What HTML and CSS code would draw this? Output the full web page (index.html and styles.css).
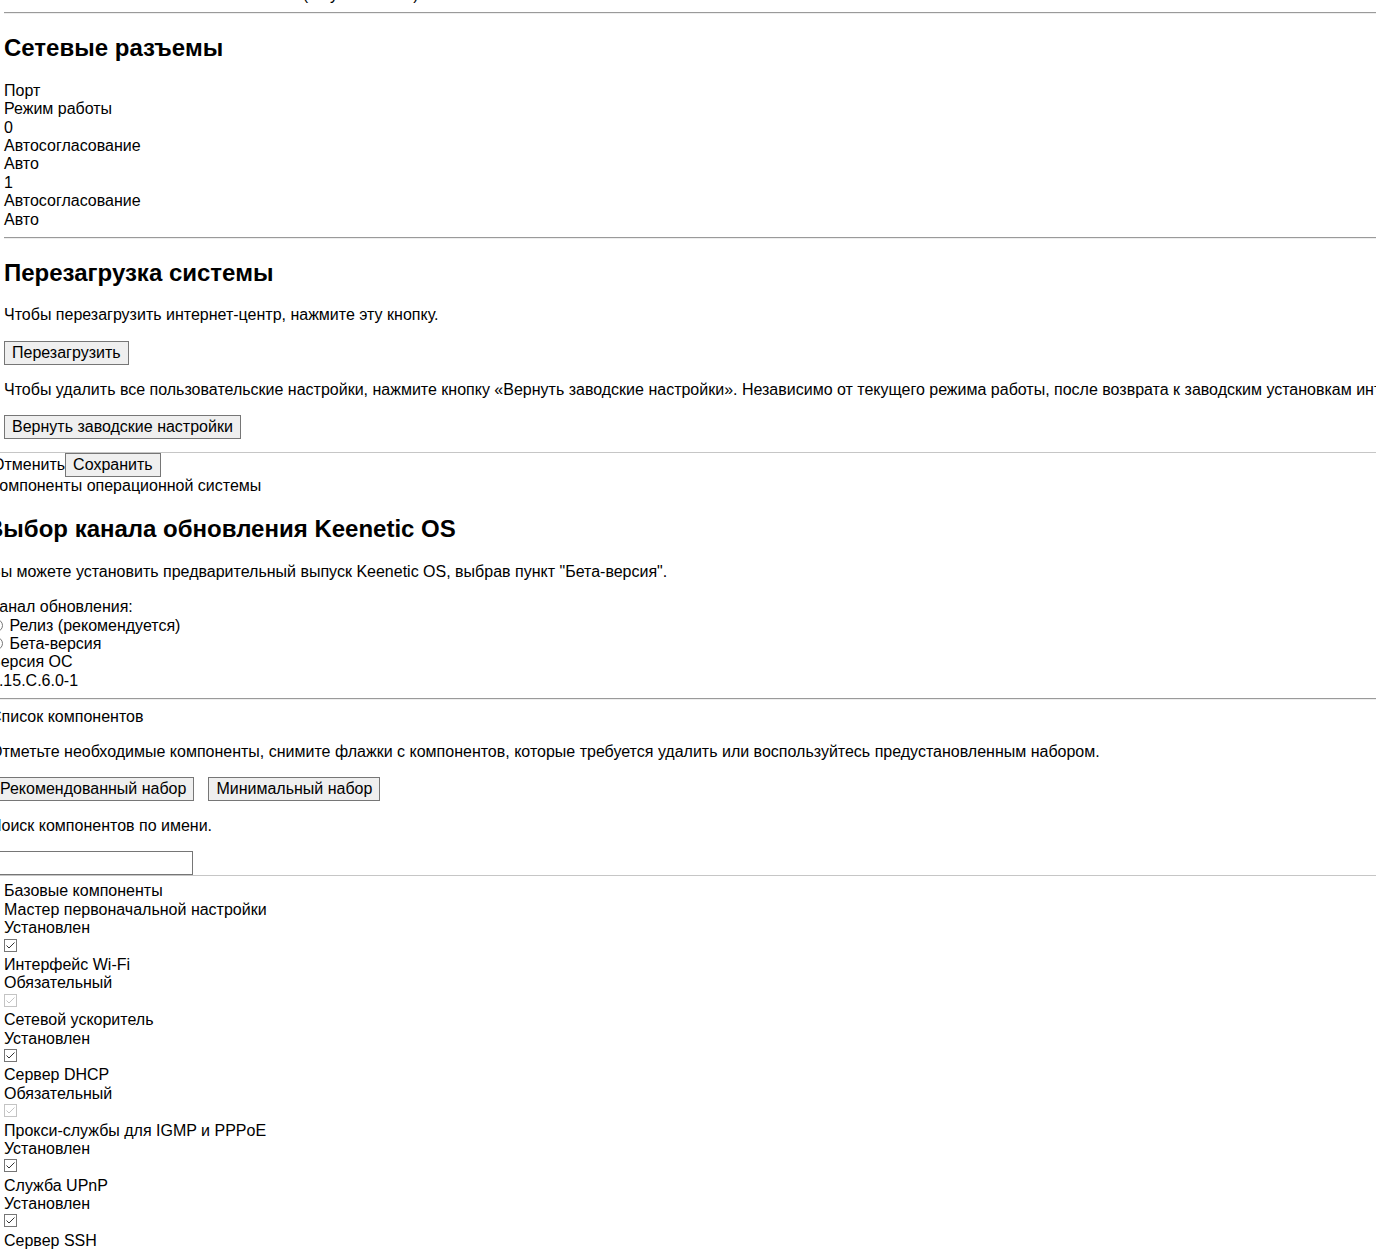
FILE: index.html
```html
<!DOCTYPE html>
<html lang="ru">
<head>
<meta charset="utf-8">
<title>Системные настройки</title>
<link rel="stylesheet" href="styles.css">
</head>
<body>
<div class="page">
  <div class="cut">Автоматическое включение EEE на все (по умолчанию)</div>
  <hr class="rule">

  <h2 class="title">Сетевые разъемы</h2>
  <div class="lines">
    <div>Порт</div>
    <div>Режим работы</div>
    <div>0</div>
    <div>Автосогласование</div>
    <div>Авто</div>
    <div>1</div>
    <div>Автосогласование</div>
    <div>Авто</div>
  </div>
  <hr class="rule">

  <h2 class="title">Перезагрузка системы</h2>
  <p class="text">Чтобы перезагрузить интернет-центр, нажмите эту кнопку.</p>
  <div class="btn-row"><button class="btn" type="button">Перезагрузить</button></div>
  <p class="text wide">Чтобы удалить все пользовательские настройки, нажмите кнопку «Вернуть заводские настройки». Независимо от текущего режима работы, после возврата к заводским установкам интернет-центр будет работать в основном режиме.</p>
  <div class="btn-row"><button class="btn" type="button">Вернуть заводские настройки</button></div>
</div>

<div class="shifted">
  <div class="divider"></div>
  <div class="actions"><span>Отменить</span><button class="btn" type="button">Сохранить</button></div>
  <div>Компоненты операционной системы</div>

  <h2 class="title title-shift">Выбор канала обновления Keenetic OS</h2>
  <p class="text">Вы можете установить предварительный выпуск Keenetic OS, выбрав пункт "Бета-версия".</p>
  <div class="lines channel">
    <div>Канал обновления:</div>
    <label class="radio-line"><input class="radio" type="radio" name="channel"> Релиз (рекомендуется)</label>
    <label class="radio-line"><input class="radio" type="radio" name="channel"> Бета-версия</label>
    <div>Версия ОС</div>
    <div>4.15.C.6.0-1</div>
  </div>
  <hr class="rule">

  <div class="label">Список компонентов</div>
  <p class="text">Отметьте необходимые компоненты, снимите флажки с компонентов, которые требуется удалить или воспользуйтесь предустановленным набором.</p>
  <div class="btn-row sets">
    <button class="btn first" type="button">Рекомендованный набор</button>
    <button class="btn" type="button">Минимальный набор</button>
  </div>
  <p class="text">Поиск компонентов по имени.</p>
  <input class="search" type="text">
  <div class="divider"></div>
</div>

<div class="page components">
  <div>Базовые компоненты</div>

  <div>Мастер первоначальной настройки</div>
  <div>Установлен</div>
  <div class="cb-line"><span class="cb"><svg width="13" height="13" viewBox="0 0 13 13"><rect x="0.5" y="0.5" width="12" height="12" fill="#fff" stroke="#767676"/><path d="M2.5 6.5 L5 9 L10.5 3.5" fill="none" stroke="#333" stroke-width="1"/></svg></span></div>

  <div>Интерфейс Wi-Fi</div>
  <div>Обязательный</div>
  <div class="cb-line"><span class="cb"><svg width="13" height="13" viewBox="0 0 13 13"><rect x="0.5" y="0.5" width="12" height="12" fill="#fff" stroke="#c4c4c4"/><path d="M2.5 6.5 L5 9 L10.5 3.5" fill="none" stroke="#c4c4c4" stroke-width="1"/></svg></span></div>

  <div>Сетевой ускоритель</div>
  <div>Установлен</div>
  <div class="cb-line"><span class="cb"><svg width="13" height="13" viewBox="0 0 13 13"><rect x="0.5" y="0.5" width="12" height="12" fill="#fff" stroke="#767676"/><path d="M2.5 6.5 L5 9 L10.5 3.5" fill="none" stroke="#333" stroke-width="1"/></svg></span></div>

  <div>Сервер DHCP</div>
  <div>Обязательный</div>
  <div class="cb-line"><span class="cb"><svg width="13" height="13" viewBox="0 0 13 13"><rect x="0.5" y="0.5" width="12" height="12" fill="#fff" stroke="#c4c4c4"/><path d="M2.5 6.5 L5 9 L10.5 3.5" fill="none" stroke="#c4c4c4" stroke-width="1"/></svg></span></div>

  <div>Прокси-службы для IGMP и PPPoE</div>
  <div>Установлен</div>
  <div class="cb-line"><span class="cb"><svg width="13" height="13" viewBox="0 0 13 13"><rect x="0.5" y="0.5" width="12" height="12" fill="#fff" stroke="#767676"/><path d="M2.5 6.5 L5 9 L10.5 3.5" fill="none" stroke="#333" stroke-width="1"/></svg></span></div>

  <div>Служба UPnP</div>
  <div>Установлен</div>
  <div class="cb-line"><span class="cb"><svg width="13" height="13" viewBox="0 0 13 13"><rect x="0.5" y="0.5" width="12" height="12" fill="#fff" stroke="#767676"/><path d="M2.5 6.5 L5 9 L10.5 3.5" fill="none" stroke="#333" stroke-width="1"/></svg></span></div>

  <div>Сервер SSH</div>
</div>
</body>
</html>
```

FILE: styles.css
```css
html, body {
  overflow: hidden;
}

body {
  margin: 0;
  font-family: "Liberation Sans", Arial, sans-serif;
  font-size: 16px;
  line-height: 1.15;
  color: #000;
  background: #fff;
}

.page {
  padding-left: 4px;
}

.cut {
  margin-top: -14px;
  white-space: nowrap;
}

.rule {
  height: 0;
  border: 0;
  border-top: 1px solid #9a9a9a;
  border-bottom: 1px solid #eeeeee;
  margin: 8px 0;
}

.title {
  font-size: 24px;
  font-weight: bold;
  margin: 19.92px 0;
}

.title-shift {
  margin-left: -4px;
}

.text {
  margin: 16px 0;
}

.wide {
  white-space: nowrap;
}

.btn-row {
  display: flex;
  height: 24px;
}

.btn {
  font-family: "Liberation Sans", Arial, sans-serif;
  font-size: 16px;
  line-height: 18px;
  height: 24px;
  box-sizing: border-box;
  padding: 2px 7px;
  margin: 0;
  border: 1px solid #767676;
  border-radius: 0;
  background: #efefef;
  color: #000;
}

.shifted {
  margin-left: -10px;
}

.divider {
  height: 0;
  border-top: 1px solid #c6c6c6;
}

.shifted > .divider:first-child {
  margin-top: 13px;
}

.actions {
  display: flex;
  align-items: center;
  height: 24px;
  padding-left: 2px;
}

.channel {
  padding-top: 1px;
}

.radio-line {
  display: block;
}

.radio {
  appearance: none;
  -webkit-appearance: none;
  width: 13px;
  height: 13px;
  margin: 0 2px 0 0;
  box-sizing: border-box;
  border: 1px solid #767676;
  border-radius: 50%;
  background: #fff;
  vertical-align: -1px;
}

.sets {
  gap: 14px;
}

.sets .first {
  margin-left: 2px;
}

.search {
  display: block;
  width: 203px;
  height: 24px;
  box-sizing: border-box;
  margin: 0;
  border: 1px solid #767676;
  background: #fff;
  font-family: "Liberation Sans", Arial, sans-serif;
  font-size: 16px;
}

.components {
  padding-top: 6px;
}

.cb-line {
  height: 18.4px;
}

.cb {
  display: inline-block;
  width: 13px;
  height: 13px;
  margin-top: 1px;
}

.cb svg {
  display: block;
}
```
